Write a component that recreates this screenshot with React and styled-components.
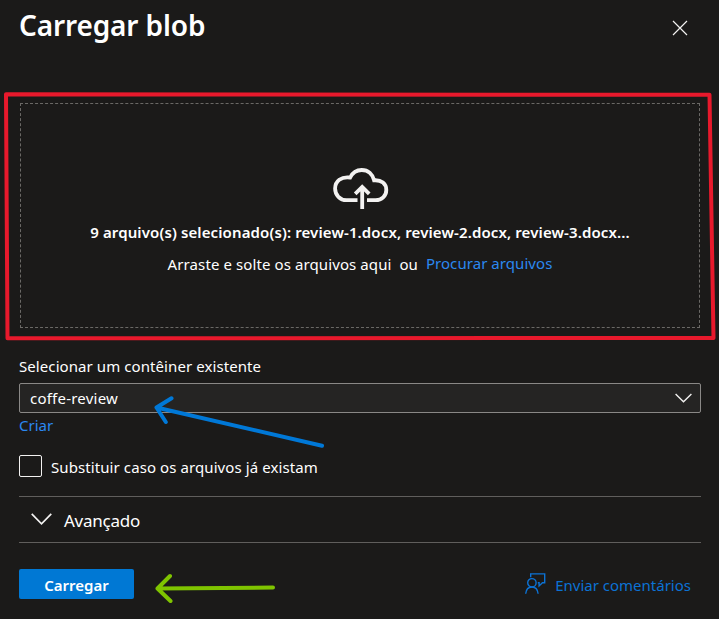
import React from "react";
import styled, { createGlobalStyle } from "styled-components";

const GlobalStyle = createGlobalStyle`
  * { box-sizing: border-box; }
  html, body { margin: 0; background: #1b1a19; }
  body { font-family: "Noto Sans", "Open Sans", sans-serif; font-size: 15px; line-height: 20px; color: #fff; overflow: hidden; }
`;

const Panel = styled.main`
  position: relative;
  display: flex;
  flex-direction: column;
  width: 719px;
  height: 619px;
  padding: 0 18px 0 19px;
  background: #1b1a19;
`;

const Header = styled.header`
  display: flex;
  justify-content: space-between;
  height: 103px;
  padding: 5px 13px 0 0;
`;

const Title = styled.h1`
  margin: 0;
  font-size: 28px;
  line-height: 40px;
  font-weight: 600;
  white-space: nowrap;
  letter-spacing: ${(p) => p.$track}px;
`;

const CloseButton = styled.button`
  display: flex;
  width: 16px;
  height: 16px;
  margin-top: 15px;
  padding: 0;
  border: 0;
  background: none;
  color: #f3f2f1;
`;

const Text = styled.span`
  white-space: nowrap;
  font-weight: ${(p) => (p.$bold ? 600 : 400)};
  font-size: ${(p) => p.$size || 15}px;
  letter-spacing: ${(p) => p.$track || 0}px;
`;

const Link = styled.a`
  color: #2b88f0;
  white-space: nowrap;
  letter-spacing: ${(p) => p.$track || 0}px;
`;

const DropZone = styled.section`
  display: flex;
  flex-direction: column;
  align-items: center;
  height: 225px;
  margin-right: 1px;
  margin-left: 1px;
  padding-top: 64px;
  border: 1px dashed #6b6966;
  & > svg { margin-left: 2px; }
`;

const FileSummary = styled.div`
  display: flex;
  margin-top: 12px;
`;

const BrowseRow = styled.div`
  display: flex;
  gap: 8px;
  margin-top: 12px;
  & > a { margin-top: -1px; }
`;

const Field = styled.div`
  display: flex;
  flex-direction: column;
  align-items: flex-start;
  margin-top: 28px;
`;

const Select = styled.div`
  display: flex;
  align-items: center;
  justify-content: space-between;
  width: 100%;
  height: 30px;
  margin: 7px 0 2px;
  padding: 0 8px 0 10px;
  border: 1px solid #8a8886;
  border-radius: 2px;
  background: #252423;
`;

const CheckRow = styled.label`
  display: flex;
  align-items: center;
  gap: 9px;
  height: 23px;
  margin-top: 20px;
`;

const CheckBox = styled.span`
  width: 23px;
  height: 22px;
  margin-bottom: 1px;
  border: 1px solid #f3f2f1;
  border-radius: 2px;
`;

const Accordion = styled.div`
  display: flex;
  align-items: center;
  gap: 12px;
  height: 47px;
  margin-top: 18px;
  padding: 2px 0 0 12px;
  border-top: 1px solid #605e5c;
  border-bottom: 1px solid #605e5c;
  & > svg { margin-bottom: 3px; }
`;

const Footer = styled.footer`
  display: flex;
  align-items: center;
  justify-content: space-between;
  height: 30px;
  margin-top: 26px;
  padding-right: 10px;
`;

const PrimaryButton = styled.button`
  width: 115px;
  height: 30px;
  padding: 2px 0 0;
  border: 0;
  border-radius: 2px;
  background: #0078d4;
  color: #fff;
  font: 600 15px/20px "Noto Sans", sans-serif;
  letter-spacing: ${(p) => p.$track || 0}px;
`;

const Feedback = styled.a`
  display: flex;
  gap: 9px;
  padding-top: 2px;
  color: #0c72d4;
  svg { margin-top: -2px; }
`;

const Annotations = styled.svg`
  position: absolute;
  top: 0;
  left: 0;
  pointer-events: none;
`;

const Chevron = ({ width, height }) => (
  <svg width={width} height={height} viewBox="0 0 20 11" fill="none" stroke="#f3f2f1" strokeWidth="1.6">
    <path d="M.7.7 10 10 19.3.7" />
  </svg>
);

const CloudUpload = () => (
  <svg width="56" height="42" viewBox="0 0 56 42" fill="none" stroke="#f3f2f1" strokeWidth="3.8">
    <path d="M24.500 32.200H13.500C7 32.200 2.100 27.200 2.100 20.600 2.100 13.200 8.200 8.200 17.200 9.500 19.500 4.800 23.500 2 28.700 2c6.700 0 11 4.400 12.400 10.300C48.400 11.800 53.300 15.600 53.300 22c0 6-4.700 10.200-10.600 10.200H34" />
    <path d="M29.200 41V19M22.200 25.800l7-6.800 7 6.800" />
  </svg>
);

const FeedbackIcon = () => (
  <svg width="21" height="21" viewBox="0 0 21 21" fill="none" stroke="currentColor" strokeWidth="1.4">
    <circle cx="6.900" cy="9.800" r="4.200" />
    <path d="M.7 20.700c.4-4 2.800-6.700 6.200-6.700s5.800 2.700 6.200 6.700M5.700 4.200V.9h14v8.900h-2.200l-3.400 3.200V9.800H12.800" />
  </svg>
);

export default function App() {
  return (
    <>
      <GlobalStyle />
      <Panel>
        <Header>
          <Title $track={-0.13}>Carregar blob</Title>
          <CloseButton aria-label="Fechar">
            <svg width="16" height="16" viewBox="0 0 16 16" stroke="currentColor" strokeWidth="1.2">
              <path d="m1 1 14 14M15 1 1 15" />
            </svg>
          </CloseButton>
        </Header>
        <DropZone>
          <CloudUpload />
          <FileSummary>
            <Text $bold $track={0.12}>9 arquivo(s) selecionado(s): review-1.docx, review-2.docx, review-3.docx...</Text>
          </FileSummary>
          <BrowseRow>
            <Text $track={0.1}>Arraste e solte os arquivos aqui</Text>
            <Text>ou</Text>
            <Link $track={0.06}>Procurar arquivos</Link>
          </BrowseRow>
        </DropZone>
        <Field>
          <Text $track={0.08}>Selecionar um contêiner existente</Text>
          <Select>
            <Text $track={0.22}>coffe-review</Text>
            <Chevron width={17} height={10} />
          </Select>
          <Link>Criar</Link>
        </Field>
        <CheckRow>
          <CheckBox />
          <Text $track={0.09}>Substituir caso os arquivos já existam</Text>
        </CheckRow>
        <Accordion>
          <Chevron width={21} height={12} />
          <Text $size={17} $track={-0.25}>Avançado</Text>
        </Accordion>
        <Footer>
          <PrimaryButton>Carregar</PrimaryButton>
          <Feedback>
            <FeedbackIcon />
            <Text>Enviar comentários</Text>
          </Feedback>
        </Footer>
        <Annotations width="719" height="619" fill="none" strokeLinecap="round" strokeLinejoin="round">
          <path d="M6 94.300 709.500 94.800 713.500 338 7.500 338.200Z" stroke="#e8192c" strokeWidth="4" />
          <path d="M322 445.700 156.500 407.500M171.500 398.300 156.500 407.500 165.800 422" stroke="#0078d7" strokeWidth="4" />
          <path d="M273 587.600 157.500 588.500M170 576 157.500 588.500 170.500 601" stroke="#7fc400" strokeWidth="4" />
        </Annotations>
      </Panel>
    </>
  );
}
